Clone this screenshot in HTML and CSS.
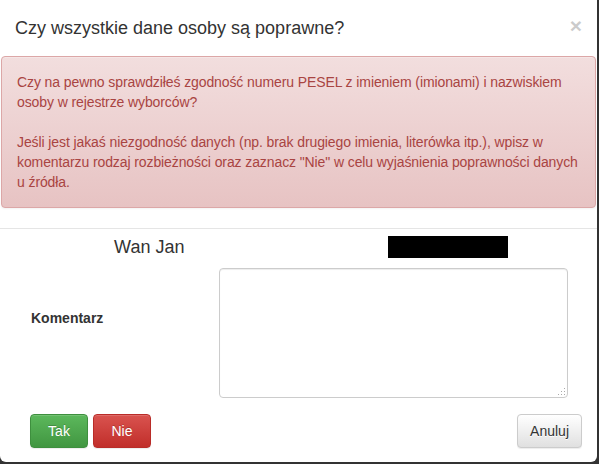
FILE: index.html
```
<!DOCTYPE html>
<html lang="pl">
<head>
<meta charset="utf-8">
<title>Weryfikacja danych</title>
<link rel="stylesheet" href="styles.css">
</head>
<body>
<div class="modal">
  <div class="modal-header">
    <button class="close" type="button">×</button>
    <h4 class="modal-title">Czy wszystkie dane osoby są poprawne?</h4>
  </div>
  <div class="alert">
    <p>Czy na pewno sprawdziłeś zgodność numeru PESEL z imieniem (imionami) i nazwiskiem osoby w rejestrze wyborców?</p>
    <p class="alert-second">Jeśli jest jakaś niezgodność danych (np. brak drugiego imienia, literówka itp.), wpisz w komentarzu rodzaj rozbieżności oraz zaznacz "Nie" w celu wyjaśnienia poprawności danych u źródła.</p>
  </div>
  <div class="person-row">
    <div class="person-cell person-name">Wan Jan</div>
    <div class="person-cell"><span class="redacted"></span></div>
  </div>
  <div class="form-row">
    <label class="form-label" for="komentarz">Komentarz</label>
    <div class="textarea-wrap">
      <textarea id="komentarz" class="form-control"></textarea>
      <span class="grip"></span>
    </div>
  </div>
  <div class="modal-footer">
    <div class="btn-group-left">
      <button class="btn btn-success" type="button">Tak</button>
      <button class="btn btn-danger" type="button">Nie</button>
    </div>
    <button class="btn btn-default" type="button">Anuluj</button>
  </div>
</div>
</body>
</html>
```
FILE: styles.css
```
html, body {
  margin: 0;
  padding: 0;
}
body {
  background: #333;
  font-family: "Liberation Sans", Arial, Helvetica, sans-serif;
  font-size: 14px;
  line-height: 20px;
  color: #333;
  width: 599px;
  height: 464px;
  overflow: hidden;
}
.modal {
  width: 597px;
  height: 462px;
  background: #fff;
  border-radius: 0 0 6px 6px;
  box-sizing: border-box;
  overflow: hidden;
  display: flex;
  flex-direction: column;
}
.modal-header {
  padding: 15px 15px 15px 15px;
  height: 56px;
  box-sizing: border-box;
}
.modal-title {
  margin: 0;
  font-size: 18px;
  line-height: 26px;
  font-weight: normal;
  color: #333;
}
.close {
  float: right;
  margin-top: 0;
  padding: 0;
  border: 0;
  background: transparent;
  font-family: "Liberation Sans", Arial, sans-serif;
  font-size: 21px;
  font-weight: bold;
  line-height: 1;
  color: #000;
  opacity: 0.2;
  text-shadow: 0 1px 0 #fff;
}
.alert {
  margin: 0 1px;
  padding: 15px 13px 15px 15px;
  border: 1px solid #dca7a7;
  border-radius: 4px;
  color: #a94442;
  letter-spacing: -0.1px;
  box-shadow: inset 0 1px 0 rgba(255,255,255,.25), 0 1px 2px rgba(0,0,0,.05);
  background-color: #f2dede;
  background-image: linear-gradient(to bottom, #f2dede 0, #e7c3c3 100%);
}
.alert p {
  margin: 0;
}
.alert .alert-second {
  margin-top: 20px;
}
.person-row {
  margin-top: 20px;
  border-top: 1px solid #e5e5e5;
  padding-top: 7px;
  display: grid;
  grid-template-columns: 1fr 1fr;
}
.person-cell {
  text-align: center;
  height: 22px;
}
.person-name {
  font-size: 18px;
  line-height: 22px;
  color: #333;
}
.redacted {
  display: inline-block;
  width: 120px;
  height: 22px;
  background: #000;
  vertical-align: top;
}
.form-row {
  margin-top: 10px;
  display: flex;
}
.form-label {
  width: 188px;
  padding-left: 31px;
  padding-top: 40px;
  font-weight: bold;
  color: #333;
}
.textarea-wrap {
  position: relative;
  width: 349px;
  height: 130px;
}
.form-control {
  display: block;
  width: 349px;
  height: 130px;
  box-sizing: border-box;
  margin: 0;
  padding: 6px 12px;
  border: 1px solid #ccc;
  border-radius: 4px;
  box-shadow: inset 0 1px 1px rgba(0,0,0,.075);
  resize: none;
  font-family: inherit;
  font-size: 14px;
  background: #fff;
}
.grip {
  position: absolute;
  right: 3px;
  bottom: 3px;
  width: 8px;
  height: 8px;
  background-image: radial-gradient(circle, #aaa 0.8px, transparent 1px);
  background-size: 3px 3px;
  clip-path: polygon(100% 0, 100% 100%, 0 100%);
}
.modal-footer {
  margin-top: 16px;
  padding: 0 15px 0 30px;
  display: flex;
  justify-content: space-between;
  align-items: flex-start;
}
.btn-group-left {
  display: flex;
  gap: 5px;
}
.btn {
  height: 34px;
  box-sizing: border-box;
  padding: 6px 12px;
  font-family: inherit;
  font-size: 14px;
  line-height: 20px;
  border: 1px solid transparent;
  border-radius: 4px;
  cursor: pointer;
}
.btn-success,
.btn-danger {
  width: 58px;
  color: #fff;
  text-shadow: 0 -1px 0 rgba(0,0,0,.2);
  box-shadow: inset 0 1px 0 rgba(255,255,255,.15), 0 1px 1px rgba(0,0,0,.075);
}
.btn-success {
  background-image: linear-gradient(to bottom, #5cb85c 0, #419641 100%);
  border-color: #3e8f3e;
}
.btn-danger {
  background-image: linear-gradient(to bottom, #d9534f 0, #c12e2a 100%);
  border-color: #b92c28;
}
.btn-default {
  color: #333;
  text-shadow: 0 1px 0 #fff;
  background-image: linear-gradient(to bottom, #fff 0, #e0e0e0 100%);
  border-color: #ccc;
  box-shadow: inset 0 1px 0 rgba(255,255,255,.15), 0 1px 1px rgba(0,0,0,.075);
}
```
